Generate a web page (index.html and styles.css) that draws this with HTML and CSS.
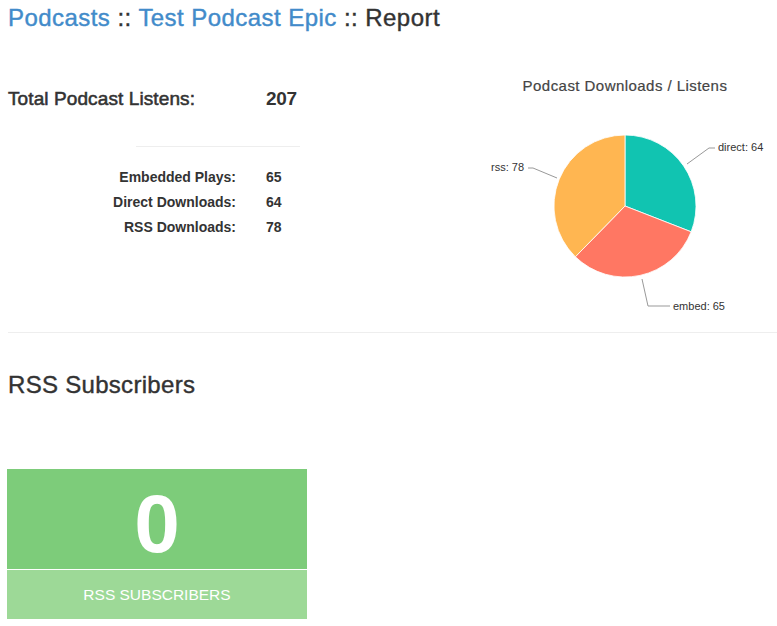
FILE: index.html
```html
<!DOCTYPE html>
<html>
<head>
<meta charset="utf-8">
<link rel="stylesheet" href="styles.css">
</head>
<body>
<div class="page">
  <h1 class="title"><a href="#">Podcasts</a> :: <a href="#">Test Podcast Epic</a> :: Report</h1>

  <div class="top-row">
    <div class="stats">
      <div class="total">
        <span class="total-label">Total Podcast Listens:</span>
        <span class="total-value">207</span>
      </div>
      <hr class="stats-rule">
      <div class="breakdown">
        <span class="b-label">Embedded Plays:</span><span class="b-value">65</span>
        <span class="b-label">Direct Downloads:</span><span class="b-value">64</span>
        <span class="b-label">RSS Downloads:</span><span class="b-value">78</span>
      </div>
    </div>

    <div class="chart">
      <svg width="307" height="250" viewBox="0 0 307 250" xmlns="http://www.w3.org/2000/svg">
        <text x="155" y="21" text-anchor="middle" class="chart-title">Podcast Downloads / Listens</text>
        <path d="M155,136 L155,65 A71,71 0 0 1 221.15,161.79 Z" fill="#11c4b1" stroke="#fff" stroke-width="0.8"/>
        <path d="M155,136 L221.15,161.79 A71,71 0 0 1 105.37,186.79 Z" fill="#ff7763" stroke="#fff" stroke-width="0.8"/>
        <path d="M155,136 L105.37,186.79 A71,71 0 0 1 155,65 Z" fill="#ffb651" stroke="#fff" stroke-width="0.8"/>
        <polyline points="217,94 239,78 245,78" fill="none" stroke="#999" stroke-width="1"/>
        <polyline points="58,98 63,98 87,108" fill="none" stroke="#999" stroke-width="1"/>
        <polyline points="172,209 178,236 200,236" fill="none" stroke="#999" stroke-width="1"/>
        <text x="248" y="81" class="slice-label">direct: 64</text>
        <text x="54" y="101" text-anchor="end" class="slice-label">rss: 78</text>
        <text x="203" y="240" class="slice-label">embed: 65</text>
      </svg>
    </div>
  </div>

  <hr class="divider">

  <h2 class="section-title">RSS Subscribers</h2>

  <div class="stat-box">
    <div class="stat-number">0</div>
    <div class="stat-caption">RSS SUBSCRIBERS</div>
  </div>
</div>
</body>
</html>
```

FILE: styles.css
```css
html, body {
  margin: 0;
  padding: 0;
  background: #fff;
}

body {
  font-family: "Liberation Sans", Arial, Helvetica, sans-serif;
  color: #333;
}

.page {
  padding-left: 8px;
}

.title {
  margin: 5px 0 0;
  font-size: 24px;
  line-height: 26px;
  font-weight: normal;
  letter-spacing: 0.45px;
  -webkit-text-stroke: 0.4px currentColor;
  color: #333;
}

.title a {
  color: #428bca;
  text-decoration: none;
}

.top-row {
  display: grid;
  grid-template-columns: 1fr 307px;
  margin-top: 39px;
}

.stats {
  padding-top: 17px;
}

.total {
  display: grid;
  grid-template-columns: 258px auto;
  font-size: 19px;
  line-height: 24px;
  color: #333;
}

.total-label {
  font-weight: normal;
  letter-spacing: 0.1px;
  -webkit-text-stroke: 0.55px currentColor;
}

.total-value {
  font-weight: bold;
  letter-spacing: -0.3px;
}

.stats-rule {
  margin: 35px 0 0 128px;
  width: 164px;
  border: 0;
  border-top: 1px solid #eee;
  height: 0;
}

.breakdown {
  margin-top: 18px;
  display: grid;
  grid-template-columns: 228px auto;
  column-gap: 30px;
  font-size: 14px;
  line-height: 25px;
  font-weight: bold;
  color: #333;
}

.b-label {
  text-align: right;
}

.chart svg {
  display: block;
}

.chart-title {
  font-family: "Liberation Sans", Arial, sans-serif;
  font-size: 15px;
  letter-spacing: 0.45px;
  fill: #444;
  stroke: #444;
  stroke-width: 0.2px;
}

.slice-label {
  font-family: "Liberation Sans", Arial, sans-serif;
  font-size: 11px;
  fill: #333;
}

.divider {
  margin: 12px 0 0;
  border: 0;
  border-top: 1px solid #eee;
  height: 0;
}

.section-title {
  margin: 39px 0 0;
  font-size: 24px;
  line-height: 26px;
  font-weight: normal;
  letter-spacing: 0.3px;
  -webkit-text-stroke: 0.4px currentColor;
  color: #333;
}

.stat-box {
  margin: 71px 0 0 -1px;
  width: 300px;
}

.stat-number {
  background: #7dcc7a;
  color: #fff;
  text-align: center;
  font-size: 82px;
  font-weight: bold;
  height: 90px;
  line-height: 90px;
  padding-top: 10px;
}

.stat-caption {
  background: #9dd997;
  border-top: 1px solid #fff;
  color: #fff;
  text-align: center;
  font-size: 15.5px;
  height: 48px;
  line-height: 48px;
  padding-top: 1px;
}
```
